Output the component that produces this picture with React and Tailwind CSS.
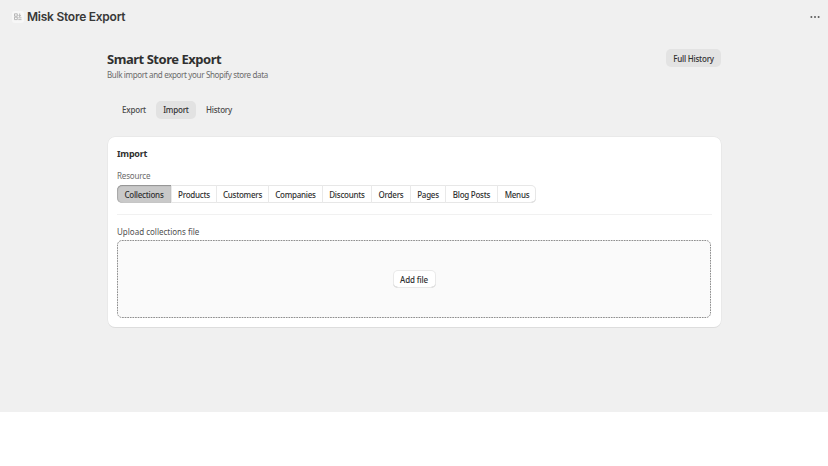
const resources = [
  { name: 'Collections', width: 'w-[55px]', active: true },
  { name: 'Products', width: 'w-[45px]' },
  { name: 'Customers', width: 'w-[52px]' },
  { name: 'Companies', width: 'w-[54px]' },
  { name: 'Discounts', width: 'w-[49px]' },
  { name: 'Orders', width: 'w-[39px]' },
  { name: 'Pages', width: 'w-[35px]' },
  { name: 'Blog Posts', width: 'w-[52px]' },
  { name: 'Menus', width: 'w-[38px]' },
];

function AppIcon() {
  return (
    <span className="flex size-[12px] items-center justify-center rounded-[3px] bg-[#f7f7f7]">
      <svg viewBox="0 0 8 8" className="size-[8px]" fill="none" stroke="#a8a8a8" strokeWidth="0.8">
        <path d="M0.5 0.8h2.8v2.4H0.5zM0.5 4.2h2.8v2.4H0.5zM4.3 6.6h3.2M4.3 4.8h3.2M5.7 0.5v3M4.6 2.2l1.1 1.3 1.1-1.3" />
      </svg>
    </span>
  );
}

function TopBar() {
  return (
    <header className="flex h-[33px] items-center justify-between pl-[12px] pr-[8px]">
      <div className="flex items-center gap-[3px]">
        <AppIcon />
        <h1 className="whitespace-nowrap font-['Inter',sans-serif] text-[12px] font-semibold leading-[16px] tracking-[-0.25px] text-[#383838]">
          Misk Store Export
        </h1>
      </div>
      <svg viewBox="0 0 10 4" className="h-[4px] w-[10px]" fill="#5c5c5c">
        <circle cx="1.4" cy="2" r="1" />
        <circle cx="5" cy="2" r="1" />
        <circle cx="8.6" cy="2" r="1" />
      </svg>
    </header>
  );
}

function PageHeading() {
  return (
    <div className="flex h-[52px] items-start justify-between">
      <div className="whitespace-nowrap pt-px">
        <h2 className="text-[13px] font-bold leading-[18px] tracking-[-0.47px] text-[#303030]">Smart Store Export</h2>
        <p className="pt-px text-[8px] leading-[12px] tracking-[-0.34px] text-[#6b6b6b]">Bulk import and export your Shopify store data</p>
      </div>
      <button className="flex h-[18px] w-[55px] items-center justify-center whitespace-nowrap rounded-[5px] bg-[#e3e3e3] pt-px text-[8px] font-medium tracking-[-0.22px] text-[#303030]">
        Full History
      </button>
    </div>
  );
}

function Tabs() {
  return (
    <nav className="ml-[7px] flex h-[18px] gap-[2px] text-[8px] font-medium tracking-[-0.2px] text-[#4a4a4a]">
      <button className="flex w-[40px] items-center justify-center">Export</button>
      <button className="flex w-[40px] items-center justify-center rounded-[5px] bg-[#e2e2e2] text-[#303030]">Import</button>
      <button className="flex w-[42px] items-center justify-center">History</button>
    </nav>
  );
}

function ResourcePicker() {
  return (
    <div className="flex h-[18px] w-[419px] overflow-hidden rounded-[5px] text-[8px] font-medium tracking-[-0.25px] text-[#303030] shadow-[inset_0_0_0_1px_#e7e7e7,inset_0_-1px_0_0_#c4c4c4]">
      {resources.map(({ name, width, active }) => (
        <button
          key={name}
          className={`flex items-center justify-center whitespace-nowrap border-r border-[#e9e9e9] pt-[2px] last:border-r-0 ${width} ${
            active ? 'rounded-l-[5px] bg-[#c9c9c9] shadow-[inset_0_1px_1px_#929292,inset_1px_0_1px_#aaa]' : ''
          }`}
        >
          {name}
        </button>
      ))}
    </div>
  );
}

function DropZone() {
  return (
    <div className="relative mt-[2px] flex h-[78px] w-[594px] items-center justify-center rounded-[5px] bg-[#fafafa]">
      <svg className="absolute inset-0 size-full" fill="none">
        <rect x="0.5" y="0.5" width="593" height="77" rx="4.5" stroke="#8f8f8f" strokeDasharray="1.7 0.9" />
      </svg>
      <button className="relative flex h-[18px] w-[43px] items-center justify-center whitespace-nowrap rounded-[5px] bg-white pt-px text-[8px] font-medium tracking-[-0.15px] text-[#303030] shadow-[inset_0_0_0_1px_#e9e9e9,inset_0_-1px_0_0_#bcbcbc]">
        Add file
      </button>
    </div>
  );
}

function ImportCard() {
  return (
    <section className="ml-[1px] mt-[18px] h-[190px] w-[613px] rounded-[7px] bg-white pl-[9px] pr-[9px] pt-[10px] shadow-[0_1px_0_0_#dddddd,0_0_0_0.5px_#e2e2e2]">
      <h3 className="text-[9px] font-bold leading-[14px] tracking-[-0.2px] text-[#303030]">Import</h3>
      <p className="mt-[9px] text-[8px] leading-[12px] tracking-[-0.15px] text-[#6b6b6b]">Resource</p>
      <div className="mt-[3px]">
        <ResourcePicker />
      </div>
      <hr className="mt-[11px] h-px border-0 bg-[#f1f1f1]" />
      <p className="mt-[11px] text-[8px] leading-[12px] text-[#505050]">Upload collections file</p>
      <DropZone />
    </section>
  );
}

export default function App() {
  return (
    <div className="h-[466px] w-[828px] overflow-hidden bg-white font-['Noto_Sans','Open_Sans',sans-serif]">
      <div className="h-[412px] bg-[#f0f0f0]">
        <TopBar />
        <main className="ml-[107px] w-[614px] pt-[16px]">
          <PageHeading />
          <Tabs />
          <ImportCard />
        </main>
      </div>
    </div>
  );
}
